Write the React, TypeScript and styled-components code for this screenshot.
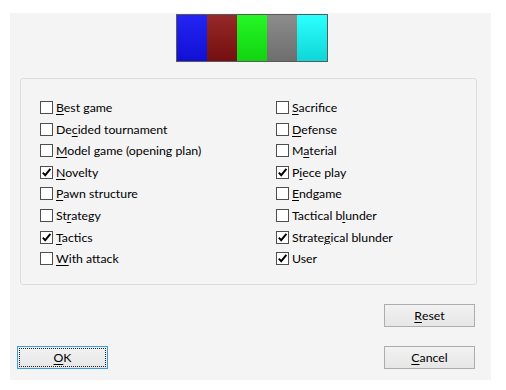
import React from "react";
import styled, { createGlobalStyle } from "styled-components";

const Global = createGlobalStyle`
  html, body { margin: 0; padding: 0; background: #ffffff; }
  body { font-family: "Lato", "Noto Sans", sans-serif; font-size: 12px; color: #000; }
`;

const Dialog = styled.div`
  margin: 13px 0 0 10px;
  width: 481px;
  height: 367px;
  box-sizing: border-box;
  background: #f4f4f4;
  display: flex;
  flex-direction: column;
  padding: 1px 14px 0 7px;
`;

const ColorBar = styled.div`
  align-self: flex-start;
  margin-left: 159px;
  display: flex;
  border: 1px solid #5a5a5a;
  height: 46px;
`;

const Swatch = styled.div<{ $top: string; $bottom: string }>`
  width: 30px;
  height: 100%;
  background: linear-gradient(to bottom, ${(p) => p.$top}, ${(p) => p.$bottom});
`;

const Panel = styled.div`
  margin: 16px 0 0 3px;
  height: 207px;
  box-sizing: border-box;
  border: 1px solid #dcdcdc;
  border-radius: 3px;
  padding: 22px 0 0 19px;
  display: grid;
  grid-template-columns: 236px 1fr;
  grid-auto-flow: column;
  grid-template-rows: repeat(8, 21.6px);
`;

const Item = styled.label`
  display: flex;
  align-items: center;
  gap: 3px;
  height: 13px;
  white-space: nowrap;
  line-height: 13px;
`;

const Box = styled.span`
  width: 13px;
  height: 13px;
  box-sizing: border-box;
  border: 1px solid #4e4e4e;
  background: #ffffff;
  display: flex;
  align-items: center;
  justify-content: center;
  flex: none;
`;

const Label = styled.span`
  font-size: 12.3px;
`;

const U = styled.span`
  text-decoration: underline;
  text-underline-offset: 2px;
`;

const Footer = styled.div`
  display: flex;
  flex-direction: column;
  padding: 19px 0 0 0;
  gap: 19px;
`;

const ButtonRow = styled.div<{ $end?: boolean }>`
  display: flex;
  justify-content: ${(p) => (p.$end ? "flex-end" : "space-between")};
  padding-right: 2px;
`;

const Button = styled.button<{ $focused?: boolean }>`
  width: 91px;
  height: 23px;
  box-sizing: border-box;
  font-family: inherit;
  font-size: 12.3px;
  color: #000;
  border: 1px solid ${(p) => (p.$focused ? "#3c9be8" : "#adadad")};
  background: linear-gradient(to bottom, #f2f2f2, #e6e6e6);
  padding: 0;
  position: relative;
  display: flex;
  align-items: center;
  justify-content: center;
  ${(p) =>
    p.$focused
      ? `&::after { content: ""; position: absolute; inset: 1px; border: 1px dotted #222; }`
      : ""}
`;

const Check = () => (
  <svg width="11" height="11" viewBox="0 0 11 11">
    <path d="M1.8 5.6 L4.2 8.2 L9.4 1.8" fill="none" stroke="#000" strokeWidth="1.9" />
  </svg>
);

type Entry = { pre: string; key: string; post: string; checked?: boolean };

const entries: Entry[] = [
  { pre: "", key: "B", post: "est game" },
  { pre: "De", key: "c", post: "ided tournament" },
  { pre: "", key: "M", post: "odel game (opening plan)" },
  { pre: "", key: "N", post: "ovelty", checked: true },
  { pre: "", key: "P", post: "awn structure" },
  { pre: "St", key: "r", post: "ategy" },
  { pre: "", key: "T", post: "actics", checked: true },
  { pre: "", key: "W", post: "ith attack" },
  { pre: "", key: "S", post: "acrifice" },
  { pre: "", key: "D", post: "efense" },
  { pre: "M", key: "a", post: "terial" },
  { pre: "P", key: "i", post: "ece play", checked: true },
  { pre: "", key: "E", post: "ndgame" },
  { pre: "Tactical b", key: "l", post: "under" },
  { pre: "Strate", key: "g", post: "ical blunder", checked: true },
  { pre: "User", key: "", post: "", checked: true },
];

const swatches = [
  ["#2424f4", "#1010d4"],
  ["#962828", "#741010"],
  ["#26f626", "#10d410"],
  ["#8c8c8c", "#6e6e6e"],
  ["#2cffff", "#10d6d6"],
];

export default function App() {
  return (
    <>
      <Global />
      <Dialog>
        <ColorBar>
          {swatches.map(([t, b], i) => (
            <Swatch key={i} $top={t} $bottom={b} />
          ))}
        </ColorBar>
        <Panel>
          {entries.map((e, i) => (
            <Item key={i}>
              <Box>{e.checked ? <Check /> : null}</Box>
              <Label>
                {e.pre}
                {e.key ? <U>{e.key}</U> : null}
                {e.post}
              </Label>
            </Item>
          ))}
        </Panel>
        <Footer>
          <ButtonRow $end>
            <Button>
              <U>R</U>eset
            </Button>
          </ButtonRow>
          <ButtonRow>
            <Button $focused>
              <U>O</U>K
            </Button>
            <Button>
              <U>C</U>ancel
            </Button>
          </ButtonRow>
        </Footer>
      </Dialog>
    </>
  );
}
